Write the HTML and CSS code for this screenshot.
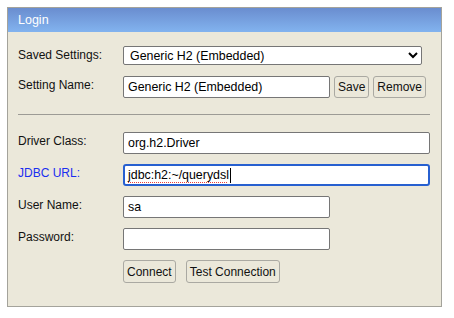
FILE: index.html
```html
<!DOCTYPE html>
<html lang="en">
<head>
  <meta charset="UTF-8" />
  <meta name="viewport" content="width=device-width, initial-scale=1.0"/>
  <title>H2 Console - Login</title>
  <link rel="stylesheet" href="styles.css">
</head>
<body>
  <!-- Login panel -->
  <div class="login">
    <div class="login-head">Login</div>
    <div class="login-body">

      <!-- Saved settings -->
      <div class="form-grid">
        <span class="field-label">Saved Settings:</span>
        <select class="field-select">
          <option>Generic H2 (Embedded)</option>
        </select>

        <span class="field-label">Setting Name:</span>
        <div class="field-row">
          <input class="field short" type="text" value="Generic H2 (Embedded)"/>
          <div class="button-group tight">
            <button class="btn">Save</button>
            <button class="btn">Remove</button>
          </div>
        </div>
      </div>

      <hr class="divider"/>

      <!-- Connection settings -->
      <div class="form-grid wide-gap">
        <span class="field-label">Driver Class:</span>
        <input class="field long" type="text" value="org.h2.Driver"/>

        <span class="field-label highlight">JDBC URL:</span>
        <div class="field long focused"><span class="misspelled">jdbc:h2:~/querydsl</span><span class="caret"></span></div>

        <span class="field-label">User Name:</span>
        <input class="field short" type="text" value="sa"/>

        <span class="field-label">Password:</span>
        <input class="field short" type="password" value=""/>

        <span></span>
        <div class="button-group">
          <button class="btn tall">Connect</button>
          <button class="btn tall">Test Connection</button>
        </div>
      </div>

    </div>
  </div>
</body>
</html>
```

FILE: styles.css
```css
body {
  font-family: "Liberation Sans", Arial, sans-serif;
  margin: 0;
  padding: 7px;
  background: #fff;
}

/* Panel */
.login {
  width: 433px;
  border: 1px solid #a4a39b;
  background: #ebe8da;
}
.login-head {
  height: 24px;
  line-height: 24px;
  padding-left: 10px;
  font-size: 12.5px;
  color: #fff;
  background: linear-gradient(#6a8dcf, #82b3ef);
}
.login-body {
  padding: 14px 10px 23px;
}

/* Form rows */
.form-grid {
  display: grid;
  grid-template-columns: 105px auto;
  row-gap: 12px;
  justify-items: start;
}
.form-grid.wide-gap {
  row-gap: 10px;
}
.field-label {
  font-size: 12px;
  color: #111;
  padding-top: 2px;
}
.field-label.highlight {
  color: #1a2ff0;
}

.field-select {
  width: 299px;
  height: 19px;
  margin-bottom: -1px;
  font-family: "Liberation Sans", Arial, sans-serif;
  font-size: 12.4px;
  border: 1px solid #767676;
  border-radius: 2px;
  background: #fff;
  color: #000;
  padding: 0 0 0 2px;
}

.field {
  box-sizing: border-box;
  height: 22px;
  margin: 0;
  padding: 0 4px;
  font-family: "Liberation Sans", Arial, sans-serif;
  font-size: 12.4px;
  color: #000;
  background: #fff;
  border: 1px solid #767676;
  border-radius: 2px;
}
.field.short { width: 207px; }
.field.long { width: 307px; }

/* Focused JDBC field */
.field.focused {
  display: flex;
  align-items: center;
  border: 2px solid #2760d0;
  border-radius: 3px;
  padding: 0 3px;
}
.misspelled {
  text-decoration: underline dotted #e8403c;
  text-decoration-thickness: 1px;
  text-underline-offset: 3px;
}
.caret {
  width: 1px;
  height: 15px;
  margin-left: 1px;
  background: #000;
}

.field-row {
  display: flex;
  align-items: center;
  gap: 4px;
}

/* Buttons */
.button-group {
  display: flex;
  gap: 10px;
}
.button-group.tight {
  gap: 4px;
}
.btn {
  height: 22px;
  padding: 0 3px;
  font-family: "Liberation Sans", Arial, sans-serif;
  font-size: 12px;
  color: #111;
  background: #ebe8da;
  border: 1px solid #aaa9a2;
  border-radius: 3px;
}
.btn.tall {
  height: 23px;
}

.divider {
  margin: 16px 1px 17px 0;
  border: 0;
  border-top: 1px solid #9c9b95;
}
```
